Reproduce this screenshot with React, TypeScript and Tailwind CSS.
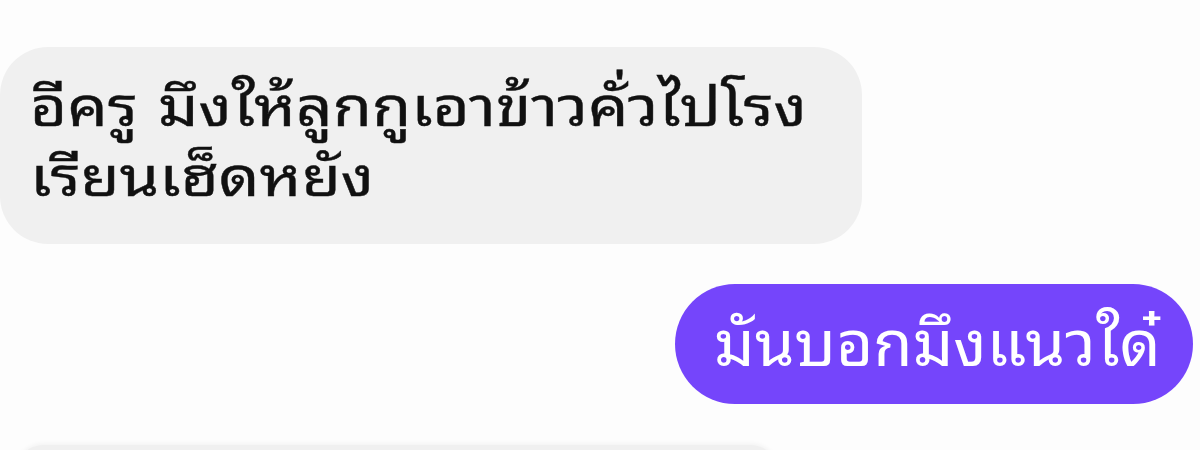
export default function App() {
  return (
    <div
      className="w-[1200px] h-[450px] overflow-hidden bg-[#fdfdfd] flex flex-col"
      style={{ fontFamily: '"DejaVu Sans", "Noto Sans Thai Looped", sans-serif' }}
    >
      <div className="pt-[47px] pl-0 flex">
        <div className="w-[862px] h-[197px] rounded-[48px] bg-[#f0f0f0] pl-[30px] pt-[26px] text-[#111] text-[54px] leading-[70px]">
          <div className="origin-left scale-x-[1.18] [-webkit-text-stroke:0.4px_#111] whitespace-nowrap">
            <div>อีครู มึงให้ลูกกูเอาข้าวคั่วไปโรง</div>
            <div>เรียนเฮ็ดหยัง</div>
          </div>
        </div>
      </div>
      <div className="flex justify-end pr-[7px] mt-[40px]">
        <div className="h-[120px] w-[518px] rounded-full bg-[#7545fb] text-white text-[64px] leading-[120px] pl-[39px] whitespace-nowrap">
          มันบอกมึงแนวใด๋
        </div>
      </div>
      <div className="flex pl-[14px] mt-[41px]">
        <div className="w-[766px] h-[60px] rounded-[40px] bg-[#f0f0f0] shadow-[0_-2px_4px_rgba(0,0,0,0.04)]" />
      </div>
    </div>
  );
}
